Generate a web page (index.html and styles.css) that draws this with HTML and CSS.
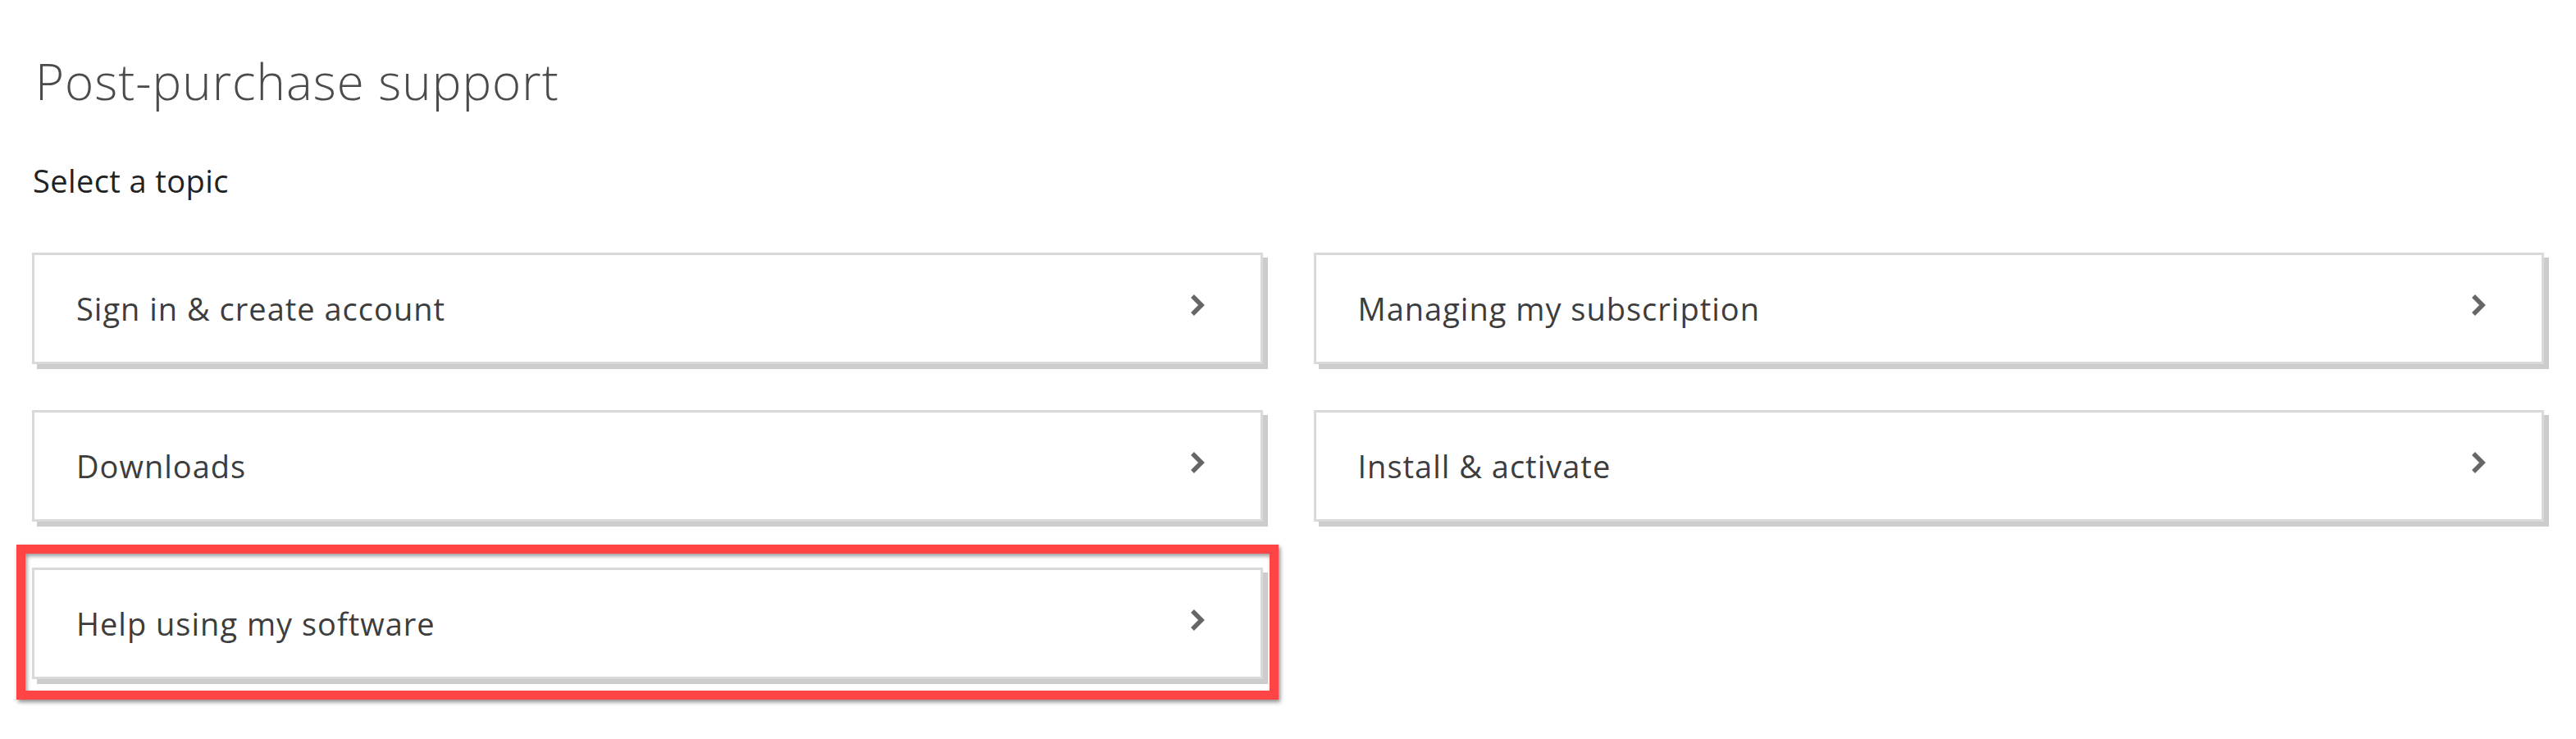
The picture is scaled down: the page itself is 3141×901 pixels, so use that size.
FILE: index.html
```html
<!DOCTYPE html>
<html lang="en">
<head>
    <meta charset="UTF-8">
    <meta name="viewport" content="width=device-width, initial-scale=1.0">
    <title>Post-purchase support</title>
    <link rel="stylesheet" href="styles.css">
</head>
<body>
    <main class="support">
        <h1 class="support-title">Post-purchase support</h1>
        <p class="support-lead">Select a topic</p>

        <div class="topics">
            <a class="topic" href="#">
                <span class="topic-label">Sign in &amp; create account</span>
                <svg class="chevron" viewBox="0 0 18 28"><polyline points="3,3 14,14 3,25"/></svg>
            </a>
            <a class="topic" href="#">
                <span class="topic-label">Managing my subscription</span>
                <svg class="chevron" viewBox="0 0 18 28"><polyline points="3,3 14,14 3,25"/></svg>
            </a>
            <a class="topic" href="#">
                <span class="topic-label">Downloads</span>
                <svg class="chevron" viewBox="0 0 18 28"><polyline points="3,3 14,14 3,25"/></svg>
            </a>
            <a class="topic" href="#">
                <span class="topic-label">Install &amp; activate</span>
                <svg class="chevron" viewBox="0 0 18 28"><polyline points="3,3 14,14 3,25"/></svg>
            </a>
            <div class="topic-wrap">
                <a class="topic" href="#">
                    <span class="topic-label">Help using my software</span>
                    <svg class="chevron" viewBox="0 0 18 28"><polyline points="3,3 14,14 3,25"/></svg>
                </a>
                <!-- red annotation frame -->
                <span class="highlight"></span>
            </div>
        </div>
    </main>
</body>
</html>
```

FILE: styles.css
```css
body {
    margin: 0;
    padding: 0;
    background: #fff;
    font-family: "Open Sans", "Noto Sans", sans-serif;
}
.support {
    padding: 63px 39px 72px 39px;
}
.support-title {
    margin: 0 0 62px 4px;
    font-size: 60px;
    line-height: 72px;
    font-weight: 300;
    letter-spacing: 1px;
    color: #4b4b4b;
}
.support-lead {
    margin: 0 0 65px 1px;
    font-size: 38px;
    line-height: 46px;
    color: #222;
    letter-spacing: 0.4px;
}
.topics {
    display: grid;
    grid-template-columns: 1fr 1fr;
    column-gap: 62px;
    row-gap: 56px;
}
.topic {
    display: flex;
    align-items: center;
    justify-content: space-between;
    box-sizing: border-box;
    height: 136px;
    padding: 0 68px 0 51px;
    background: #fff;
    border: 3px solid #d9d9d9;
    box-shadow: 6px 6px 0 #cccccc;
    text-decoration: none;
    color: #3d3d3d;
}
.topic-label {
    font-size: 38px;
    line-height: 46px;
    letter-spacing: 1px;
}
.chevron {
    width: 18px;
    height: 28px;
    margin-bottom: 9px;
}
.chevron polyline {
    fill: none;
    stroke: #666;
    stroke-width: 5.5;
    stroke-linejoin: miter;
}
.topic-wrap {
    position: relative;
}
.highlight {
    position: absolute;
    top: -28px;
    left: -19px;
    right: -19px;
    bottom: -25px;
    border: 11px solid #fe4444;
    box-shadow: 2px 3px 5px rgba(0,0,0,0.45), inset 2px 3px 5px rgba(0,0,0,0.4);
    pointer-events: none;
}
```
